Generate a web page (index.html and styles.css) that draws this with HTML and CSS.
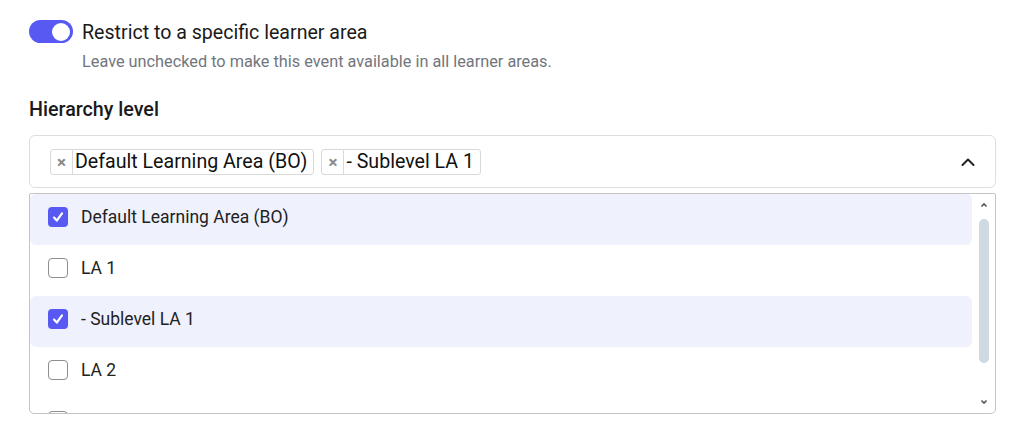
FILE: index.html
```html
<!DOCTYPE html>
<html>
<head>
<meta charset="utf-8">
<link rel="stylesheet" href="styles.css">
</head>
<body>
<div class="page">
  <div class="toggle-row">
    <span class="toggle"><span class="knob"></span></span>
    <div class="toggle-text">
      <div class="toggle-title">Restrict to a specific learner area</div>
      <div class="toggle-help">Leave unchecked to make this event available in all learner areas.</div>
    </div>
  </div>

  <div class="field-label">Hierarchy level</div>

  <div class="select">
    <div class="tags">
      <span class="tag"><span class="tag-x">×</span><span class="tag-text">Default Learning Area (BO)</span></span>
      <span class="tag"><span class="tag-x">×</span><span class="tag-text">- Sublevel LA 1</span></span>
    </div>
    <svg class="chevron" width="16" height="16" viewBox="0 0 16 16"><path d="M2.5 11 L8 5.5 L13.5 11" fill="none" stroke="#222" stroke-width="2" stroke-linecap="round" stroke-linejoin="round"/></svg>
  </div>

  <div class="dropdown">
    <div class="options">
      <div class="option selected"><span class="cb checked"><svg width="14" height="14" viewBox="0 0 14 14"><path d="M3 7.6 L5.8 10.6 L11 3.4" fill="none" stroke="#fff" stroke-width="2.2" stroke-linecap="round" stroke-linejoin="round"/></svg></span><span>Default Learning Area (BO)</span></div>
      <div class="option"><span class="cb"></span><span>LA 1</span></div>
      <div class="option selected"><span class="cb checked"><svg width="14" height="14" viewBox="0 0 14 14"><path d="M3 7.6 L5.8 10.6 L11 3.4" fill="none" stroke="#fff" stroke-width="2.2" stroke-linecap="round" stroke-linejoin="round"/></svg></span><span>- Sublevel LA 1</span></div>
      <div class="option"><span class="cb"></span><span>LA 2</span></div>
      <div class="option"><span class="cb"></span></div>
    </div>
    <div class="scrollbar">
      <svg class="arrow" width="8" height="6" viewBox="0 0 8 6"><path d="M1.5 4.5 L4 2 L6.5 4.5" fill="none" stroke="#555" stroke-width="1.6"/></svg>
      <div class="thumb"></div>
      <svg class="arrow down" width="8" height="6" viewBox="0 0 8 6"><path d="M1.5 1.5 L4 4 L6.5 1.5" fill="none" stroke="#555" stroke-width="1.6"/></svg>
    </div>
  </div>
</div>
</body>
</html>
```

FILE: styles.css
```css
* { box-sizing: border-box; }
html, body { margin: 0; padding: 0; background: #fff; }
body { font-family: Roboto, "Noto Sans", sans-serif; color: #1c1c1e; }

.page {
  padding: 20px 28px 0 29px;
  width: 1024px;
  height: 425px;
  overflow: hidden;
}

.toggle-row {
  display: flex;
  align-items: flex-start;
  gap: 9px;
}
.toggle {
  flex: none;
  width: 44px;
  height: 23px;
  border-radius: 12px;
  background: #5859f3;
  display: flex;
  align-items: center;
  justify-content: flex-end;
  padding-right: 3px;
}
.knob {
  width: 18px;
  height: 18px;
  border-radius: 50%;
  background: #fff;
}
.toggle-title {
  font-size: 19.6px;
  line-height: 26px;
  color: #1a1a1a;
}
.toggle-help {
  margin-top: 6px;
  font-size: 16.3px;
  line-height: 20px;
  color: #72767c;
}

.field-label {
  margin-top: 26px;
  font-size: 19.7px;
  font-weight: 500;
  line-height: 24px;
  color: #1a1a1a;
}

.select {
  margin-top: 13px;
  height: 53px;
  border: 1px solid #dedede;
  border-radius: 6px;
  display: flex;
  align-items: center;
  padding: 0 19px 0 20px;
}
.tags {
  flex: 1;
  display: flex;
  gap: 7px;
}
.tag {
  display: flex;
  align-items: stretch;
  height: 26px;
  border: 1px solid #d9d9d9;
  border-radius: 3px;
  font-size: 19.6px;
  line-height: 24px;
  color: #111;
}
.tag-x {
  width: 22px;
  border-right: 1px solid #d9d9d9;
  color: #8a8a8a;
  font-size: 17px;
  text-align: center;
  font-weight: 700;
}
.tag-text {
  padding: 0 6px 0 2px;
}
.chevron { flex: none; }

.dropdown {
  margin-top: 5px;
  height: 221px;
  border: 1px solid #c4c4c4;
  border-radius: 2px 2px 5px 5px;
  display: flex;
  overflow: hidden;
}
.options {
  flex: 1;
  overflow: hidden;
}
.option {
  height: 51px;
  display: flex;
  align-items: center;
  gap: 13px;
  padding-left: 18px;
  padding-bottom: 6px;
  font-size: 17.5px;
  color: #222;
  border-radius: 6px;
}
.option.selected { background: #eff1fd; }
.cb {
  flex: none;
  width: 20px;
  height: 20px;
  border: 1.5px solid #8e8e8e;
  border-radius: 4px;
  display: flex;
  align-items: center;
  justify-content: center;
}
.cb.checked {
  border: none;
  background: #5859f3;
}
.scrollbar {
  flex: none;
  width: 23px;
  display: flex;
  flex-direction: column;
  align-items: center;
  padding: 8px 0 8px 0;
}
.arrow { flex: none; }
.thumb {
  margin-top: 11px;
  width: 10px;
  height: 144px;
  border-radius: 5px;
  background: #cfd9e2;
}
.arrow.down { margin-top: auto; }
```
